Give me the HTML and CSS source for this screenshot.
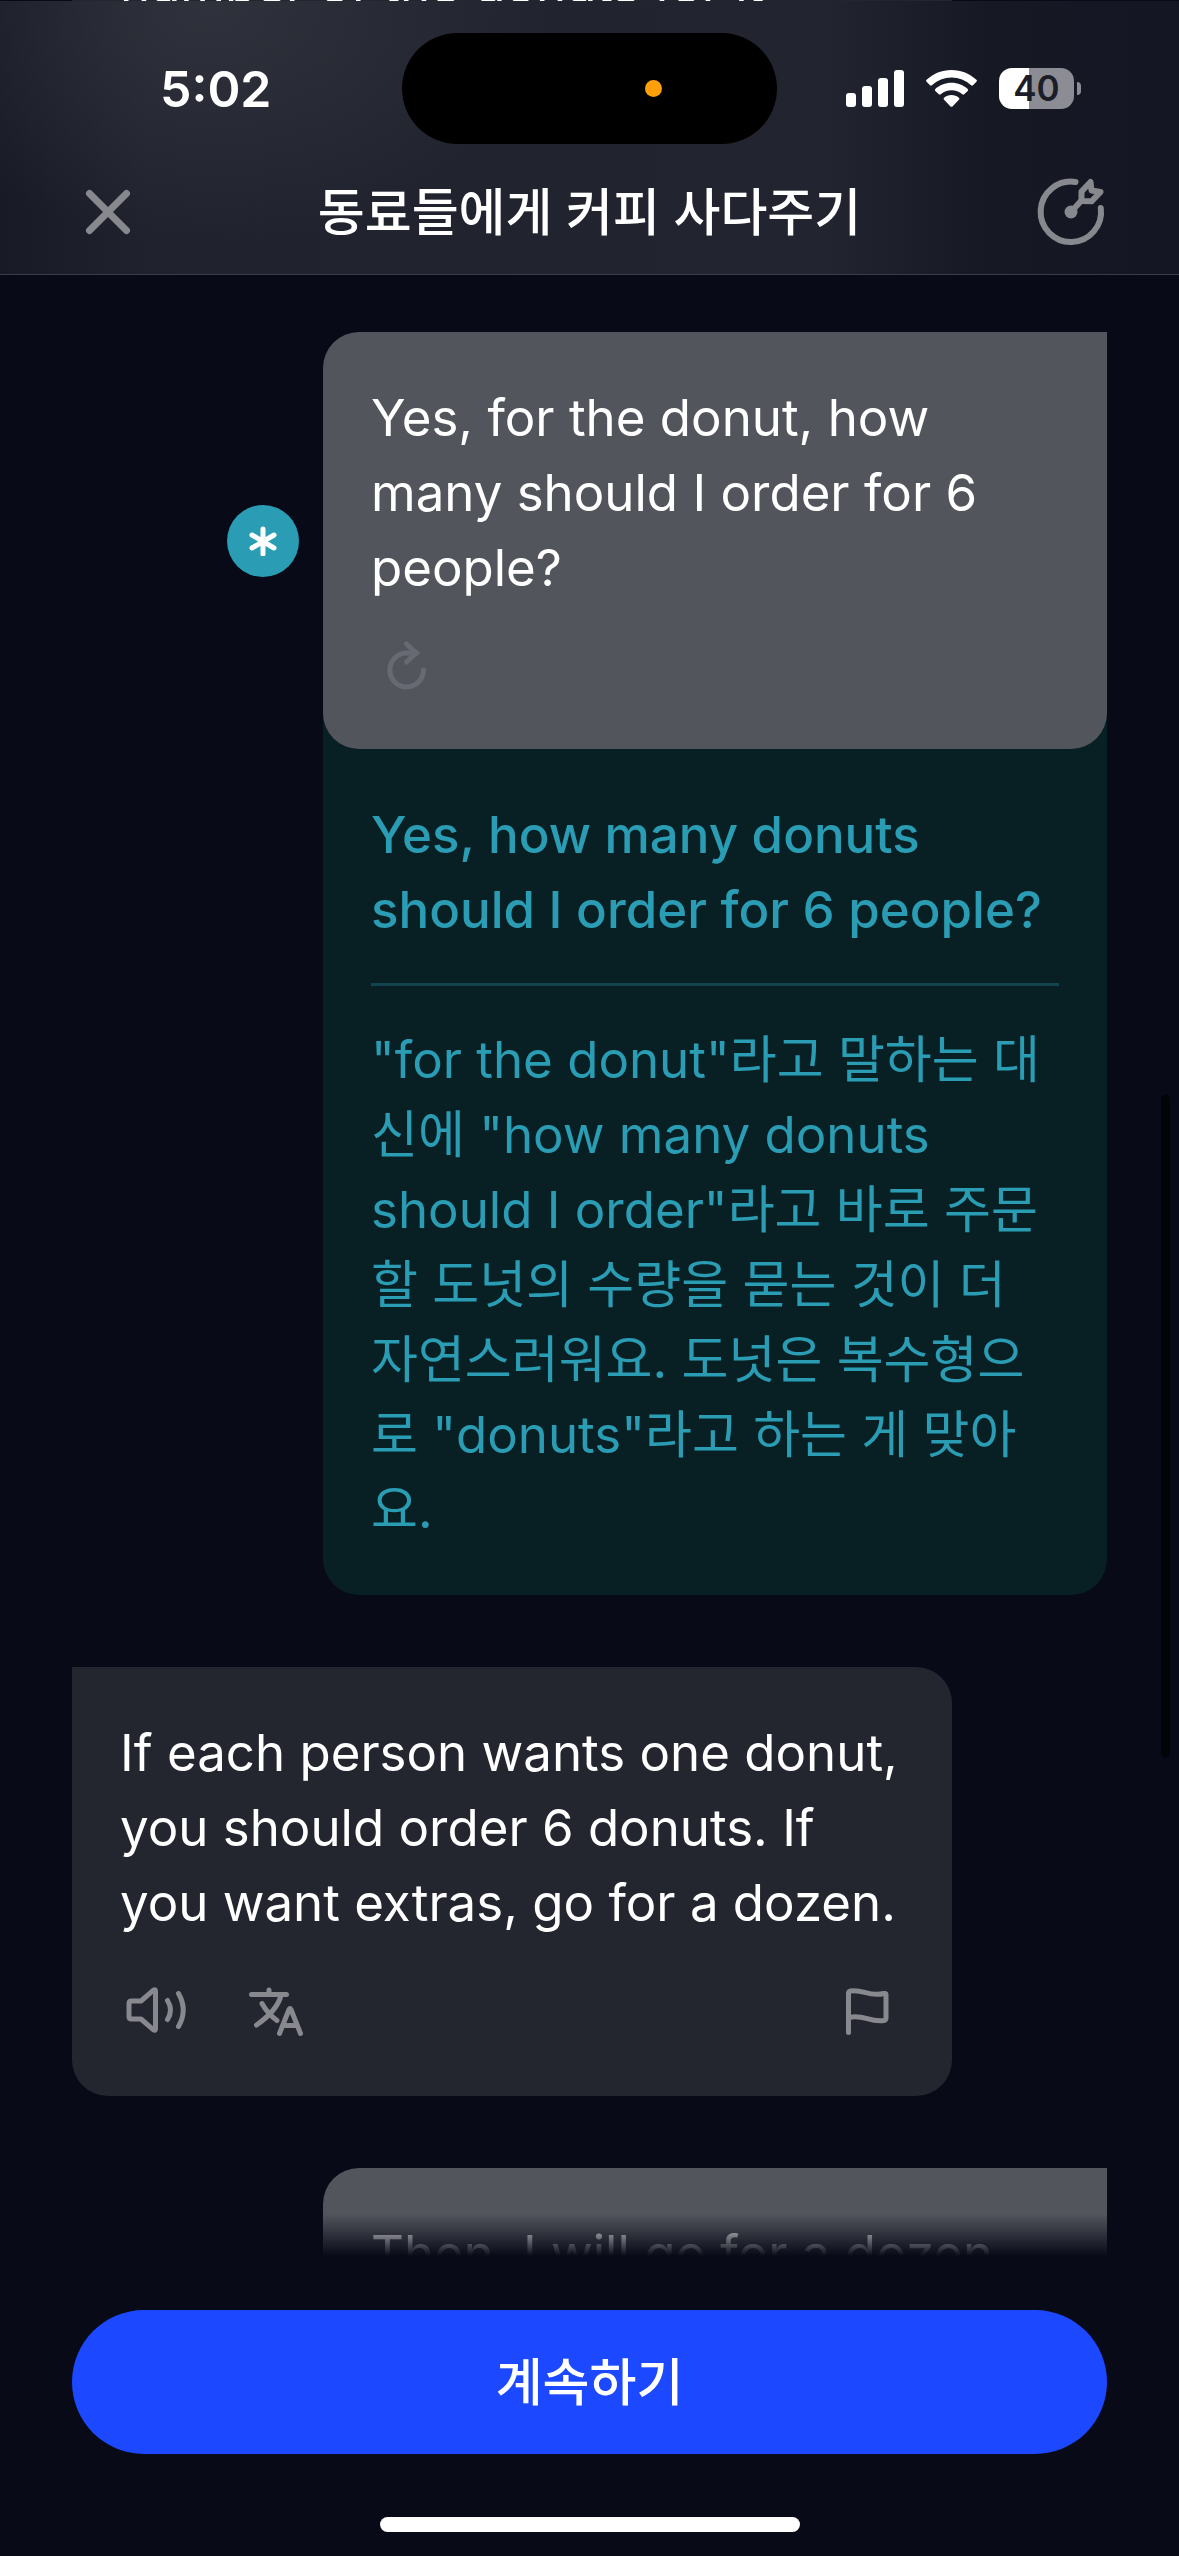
FILE: index.html
```html
<!DOCTYPE html>
<html lang="ko">
<head>
<meta charset="utf-8">
<meta name="viewport" content="width=device-width, initial-scale=1">
<title>동료들에게 커피 사다주기</title>
<link rel="stylesheet" href="styles.css">
</head>
<body>
<div class="app">
  <div class="previous"><p class="previous-text">number of the donuts for it</p></div>
  <header class="header">
    <div class="status">
      <time class="clock">5:02</time>
      <div class="island"><span class="recording"></span></div>
      <div class="indicators">
        <svg class="signal" viewBox="0 0 58 37" fill="#fff" aria-hidden="true">
          <rect x="0" y="23" width="10" height="14" rx="3"/><rect x="16" y="16" width="10" height="21" rx="3"/><rect x="32" y="8" width="10" height="29" rx="3"/><rect x="48" y="0" width="10" height="37" rx="3"/>
        </svg>
        <svg class="wifi" viewBox="0 0 51 37" fill="#fff" aria-hidden="true">
          <path d="M25.500 0C35 0 44 3.700 50.400 9.800q1 1 0 2L47 15.200q-.9.900-1.900 0A28.500 28.500 0 0 0 5.900 15.200q-1 .9-1.900 0L.6 11.800q-1-1 0-2C7 3.700 16 0 25.500 0z"/>
          <path d="M25.500 12.700c6.200 0 12 2.400 16.200 6.200q1 1 0 2l-3.500 3.400q-.9.900-1.900 0a16.500 16.500 0 0 0-21.600 0q-1 .9-1.900 0l-3.500-3.400q-1-1 0-2c4.200-3.800 10-6.200 16.200-6.200z"/>
          <path d="M25.500 25c2.800 0 5.400 1 7.400 2.700q1 1 0 2l-6.400 6.700q-1 .9-2 0l-6.400-6.700q-1-1 0-2C20.100 26 22.700 25 25.500 25z"/>
        </svg>
        <div class="battery"><span class="battery-level">40</span><span class="battery-tip"></span></div>
      </div>
    </div>
    <div class="titlebar">
      <button class="icon-button" type="button" aria-label="닫기">
        <svg class="icon" viewBox="0 0 72 72" fill="none" stroke="currentColor" stroke-width="7" stroke-linecap="round" aria-hidden="true"><path d="M17.500 17.500l37 37M54.500 17.500l-37 37"/></svg>
      </button>
      <h1 class="title">동료들에게 커피 사다주기</h1>
      <button class="icon-button" type="button" aria-label="난이도 설정">
        <svg class="icon" viewBox="0 0 72 72" fill="none" stroke="currentColor" stroke-width="6" stroke-linecap="round" stroke-linejoin="round" aria-hidden="true"><path d="M40.500 6A30.200 30.200 0 1 0 65.800 32"/><path d="M36 36l10-11"/><path d="M46.500 25V15.500L55.500 6 56.500 14.500 65.500 16 56.500 25.300z"/><circle cx="36" cy="36" r="6.500" fill="currentColor" stroke="none"/></svg>
      </button>
    </div>
  </header>

  <main class="chat">
    <section class="row row-user">
      <button class="badge" type="button" aria-label="피드백">
        <svg class="badge-icon" viewBox="0 0 30 30" fill="none" stroke="currentColor" stroke-width="5" stroke-linecap="round" aria-hidden="true"><path d="M15 3v25M4 9l22 13M26 9L4 22"/></svg>
      </button>
      <div class="bubble bubble-user">
        <p class="text">Yes, for the donut, how<br>many should I order for 6<br>people?</p>
        <div class="tools tools-user">
          <button class="icon-button faint" type="button" aria-label="다시 말하기">
            <svg class="icon" viewBox="0 0 72 72" fill="none" stroke="currentColor" stroke-width="5" stroke-linecap="round" stroke-linejoin="round" aria-hidden="true"><path d="M52.500 41A16.800 17 0 1 1 36 24H46"/><path d="M35.500 15L45 24 35.500 33"/></svg>
          </button>
        </div>
      </div>
    </section>
    <section class="feedback">
      <p class="text correction">Yes, how many donuts<br>should I order for 6 people?</p>
      <hr class="divider">
      <p class="text">"for the donut"라고 말하는 대<br>신에 "how many donuts<br>should I order"라고 바로 주문<br>할 도넛의 수량을 묻는 것이 더<br>자연스러워요. 도넛은 복수형으<br>로 "donuts"라고 하는 게 맞아<br>요.</p>
    </section>

    <section class="row row-partner">
      <div class="bubble bubble-partner">
        <p class="text">If each person wants one donut,<br>you should order 6 donuts. If<br>you want extras, go for a dozen.</p>
        <div class="tools tools-partner">
          <button class="icon-button" type="button" aria-label="듣기">
            <svg class="icon" viewBox="0 0 72 72" fill="none" stroke="currentColor" stroke-width="5" stroke-linecap="round" stroke-linejoin="round" aria-hidden="true"><path d="M9 27.500q0-2.500 2.500-2.500h9.500L33.500 14.200q2-1.200 2 1v37.600q0 2.200-2 1L21 43h-9.500q-2.500 0-2.500-2.500z"/><path d="M47.500 24.500q6 9.500 0 19M58.500 17.500q9.500 16.500 0 33"/></svg>
          </button>
          <button class="icon-button" type="button" aria-label="번역">
            <svg class="icon" viewBox="0 0 72 72" fill="none" stroke="currentColor" stroke-width="5" stroke-linecap="round" stroke-linejoin="round" aria-hidden="true"><path d="M11.500 18.500h35M29 14v4M22 27.500q5.500 10 15 17M41 19.500C38 31 28 41 16.500 49"/><path d="M39.500 57.500L49 33.500q1-2 2 0l9.500 24M43.500 49.500h13.500"/></svg>
          </button>
          <button class="icon-button last" type="button" aria-label="신고">
            <svg class="icon" viewBox="0 0 72 72" fill="none" stroke="currentColor" stroke-width="5" stroke-linecap="round" stroke-linejoin="round" aria-hidden="true"><path d="M16.500 56.500V17.500q0-2 2-2.500c12-2.500 18 6.500 33.500 2.500q2-.5 2 1V42q0 2-2 2.500C38 47 31 37.500 17 41.500"/></svg>
          </button>
        </div>
      </div>
    </section>

    <section class="row row-user row-plain">
      <div class="bubble bubble-user">
        <p class="text">Then, I will go for a dozen</p>
      </div>
    </section>
    <span class="scroll-thumb"></span>
  </main>

  <footer class="footer">
    <button class="continue" type="button">계속하기</button>
    <span class="home-indicator"></span>
  </footer>
</div>
</body>
</html>
```
FILE: styles.css
```css
* { box-sizing: border-box; margin: 0; padding: 0; }

body {
  background: #080a17;
  color: #fff;
  font-family: Inter, "Noto Sans CJK KR", sans-serif;
}

button { border: 0; background: none; color: inherit; font: inherit; }

.app {
  display: flex;
  flex-direction: column;
  height: 100vh;
  overflow: hidden;
}

/* sliver of the message scrolled away under the header */
.previous {
  display: flex;
  align-items: flex-end;
  flex: none;
  height: 1px;
  margin: 0 227px 0 72px;
  padding: 0 48px;
  overflow: hidden;
  background: #23252f;
}
.previous-text { font-size: 51px; line-height: 32px; white-space: nowrap; }

.header {
  flex: none;
  border-bottom: 1px solid #3a3c47;
  background:
    radial-gradient(ellipse 340px 230px at 210px 10px, rgba(62, 64, 74, 0.5), transparent),
    linear-gradient(90deg, #181a26 0, #20222d 150px, #22242f 70%, #161824 84%, #141623 100%);
}

.status {
  display: grid;
  grid-template-columns: 1fr 375px 1fr;
  align-items: center;
  height: 143px;
  padding-top: 32px;
}
.clock { padding-left: 160px; font-size: 50px; line-height: 62px; font-weight: 600; }
.island {
  display: flex;
  align-items: center;
  justify-content: flex-end;
  height: 111px;
  padding-right: 115px;
  border-radius: 56px;
  background: #000;
}
.recording { width: 17px; height: 17px; border-radius: 50%; background: #ff9f0a; }
.indicators { display: flex; align-items: center; gap: 22px; padding-left: 69px; }
.signal { width: 58px; height: 37px; }
.wifi { width: 51px; height: 37px; }
.battery { display: flex; align-items: center; gap: 3px; }
.battery-level {
  width: 75px;
  border-radius: 13px;
  background: linear-gradient(90deg, #fff 40%, #8c8d94 40%);
  color: #1b1d29;
  font-size: 35px;
  line-height: 41px;
  font-weight: 600;
  text-align: center;
}
.battery-tip { width: 4px; height: 13px; border-radius: 0 4px 4px 0; background: #8c8d94; }

.titlebar {
  display: flex;
  align-items: center;
  justify-content: space-between;
  height: 130px;
  padding: 6px 72px 0;
}
.title { font-size: 51px; line-height: 75px; font-weight: 500; }

.icon-button { display: block; width: 72px; height: 72px; color: #88898e; }
.icon { display: block; width: 72px; height: 72px; }
.faint { color: #676a73; }

.chat {
  position: relative;
  flex: 1;
  min-height: 0;
  overflow: hidden;
  padding: 57px 72px 0;
}
.text { font-size: 51px; line-height: 75px; font-weight: 400; white-space: nowrap; }

.row { display: flex; align-items: center; gap: 24px; }
.row-user { position: relative; padding-left: 155px; }
.row-plain { padding-left: 251px; }
.row-partner { margin: 72px 0; padding-right: 155px; }

.bubble { flex: 1; padding: 48px; }
.bubble-user { border-radius: 36px 0 36px 36px; background: #53555d; }
.bubble-partner { border-radius: 0 36px 36px 36px; background: #23252f; }

.tools { display: flex; gap: 48px; }
.tools-user { margin-top: 24px; }
.tools-partner { margin-top: 36px; }
.last { margin-left: auto; }

.badge {
  display: grid;
  place-items: center;
  width: 72px;
  height: 72px;
  border-radius: 50%;
  background: #2a9db4;
}
.badge-icon { width: 30px; height: 30px; }

/* tucked behind the rounded bottom of the message above */
.feedback {
  margin: -36px 0 0 251px;
  padding: 84px 48px 48px;
  border-radius: 0 0 36px 36px;
  background: #082024;
  color: #2a9db4;
}
.correction { font-weight: 500; }
.divider { height: 3px; margin: 36px 0; border: 0; background: #12434f; }

.scroll-thumb {
  position: absolute;
  top: 820px;
  right: 9px;
  width: 9px;
  height: 663px;
  border-radius: 5px;
  background: #030408;
}

.footer {
  position: relative;
  display: flex;
  flex: none;
  flex-direction: column;
  align-items: center;
  gap: 63px;
  padding: 54px 72px 24px;
  background: #080a17;
}
.footer::before {
  content: "";
  position: absolute;
  right: 0;
  bottom: 100%;
  left: 0;
  height: 42px;
  background: linear-gradient(rgba(8, 10, 23, 0), #080a17);
}
.continue {
  align-self: stretch;
  height: 144px;
  border-radius: 72px;
  background: #1c48ff;
  font-size: 51px;
  line-height: 75px;
  font-weight: 500;
}
.home-indicator { width: 420px; height: 15px; border-radius: 8px; background: #fff; }
```
